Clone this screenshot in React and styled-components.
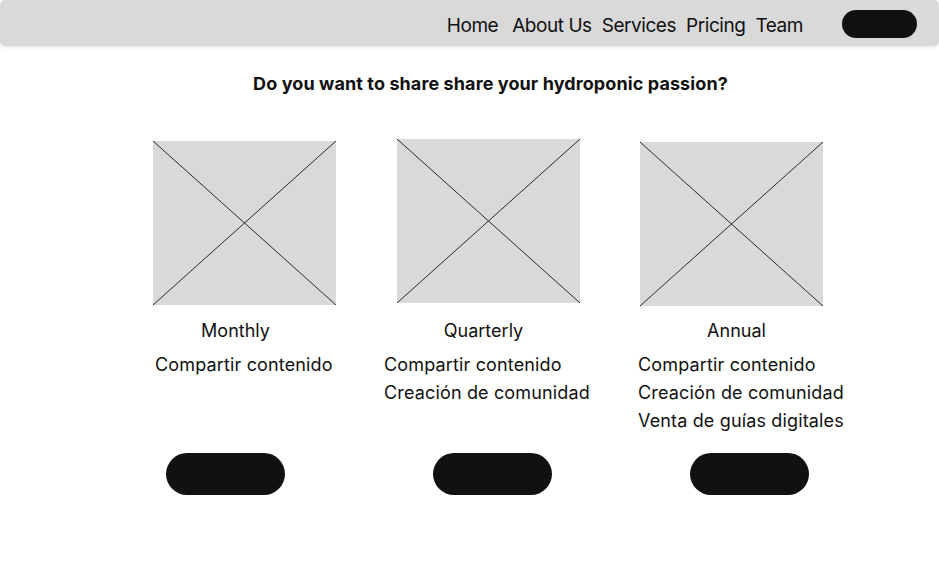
import React from "react";
import styled, { createGlobalStyle } from "styled-components";

const GlobalStyle = createGlobalStyle`
  html, body { margin: 0; padding: 0; background: #ffffff; }
  body { font-family: Inter, "Noto Sans", sans-serif; color: #111111; }
`;

const Page = styled.div`
  width: 939px;
  min-height: 568px;
  display: flex;
  flex-direction: column;
`;

const Header = styled.header`
  height: 46px;
  background: #d9d9d9;
  border-radius: 5px;
  box-shadow: 0 2px 3px rgba(0, 0, 0, 0.08);
  display: flex;
  align-items: center;
  justify-content: flex-end;
  padding: 2px 22px 0 0;
  box-sizing: border-box;
`;

const Nav = styled.nav`
  display: flex;
  gap: 10px;
  margin-right: 39px;
`;

const NavLink = styled.a`
  font-size: 19px;
  letter-spacing: -0.45px;
  color: #111111;
  text-decoration: none;
  line-height: 22px;
  margin-right: ${(p) => p.$extra || 0}px;
  margin-top: 3px;
`;

const PillButton = styled.button`
  width: ${(p) => p.$w}px;
  height: ${(p) => p.$h}px;
  border: none;
  border-radius: ${(p) => p.$h / 2}px;
  background: #111111;
  padding: 0;
  cursor: pointer;
  display: block;
`;

const Title = styled.h1`
  margin: 27px 0 0;
  font-size: 18px;
  font-weight: 700;
  line-height: 22px;
  letter-spacing: 0.1px;
  text-align: center;
  padding-left: 42px;
`;

const Plans = styled.section`
  display: flex;
  margin-top: 44px;
  padding-left: 153px;
`;

const Card = styled.div`
  width: 244px;
  display: flex;
  flex-direction: column;
  align-items: flex-start;
`;

const ImageSlot = styled.div`
  height: 167px;
  padding-top: ${(p) => p.$dy}px;
  box-sizing: border-box;
`;

const Placeholder = styled.div`
  width: 183px;
  height: 164px;
  background: #d9d9d9;
  margin-left: ${(p) => p.$dx}px;
`;

const PlanName = styled.div`
  margin-top: 13px;
  width: 183px;
  margin-left: ${(p) => p.$dx}px;
  text-align: center;
  font-size: 18px;
  line-height: 24px;
`;

const Features = styled.ul`
  list-style: none;
  margin: 8px 0 0 ${(p) => p.$dx}px;
  padding: 0;
  height: 102px;
  white-space: nowrap;
`;

const Feature = styled.li`
  font-size: 18px;
  letter-spacing: 0.15px;
  line-height: 28px;
`;

const ButtonSlot = styled.div`
  margin-left: ${(p) => p.$dx}px;
`;

const CrossImage = ({ dx }) => (
  <Placeholder $dx={dx}>
    <svg width="183" height="164" viewBox="0 0 183 164" style={{ display: "block" }}>
      <line x1="0" y1="0" x2="183" y2="164" stroke="#2b2b2b" strokeWidth="1" />
      <line x1="183" y1="0" x2="0" y2="164" stroke="#2b2b2b" strokeWidth="1" />
    </svg>
  </Placeholder>
);

const plans = [
  { name: "Monthly", features: ["Compartir contenido"], img: [2, 0], label: -9, feat: 2, btn: 13 },
  {
    name: "Quarterly",
    features: ["Compartir contenido", "Creación de comunidad"],
    img: [0, 0],
    label: -5,
    feat: -13,
    btn: 36,
  },
  {
    name: "Annual",
    features: ["Compartir contenido", "Creación de comunidad", "Venta de guías digitales"],
    img: [3, -1],
    label: 4,
    feat: -3,
    btn: 49,
  },
];

export default function App() {
  return (
    <Page>
      <GlobalStyle />
      <Header>
        <Nav>
          <NavLink href="#" $extra={4}>Home</NavLink>
          <NavLink href="#">About Us</NavLink>
          <NavLink href="#">Services</NavLink>
          <NavLink href="#">Pricing</NavLink>
          <NavLink href="#">Team</NavLink>
        </Nav>
        <PillButton $w={75} $h={28} aria-label="Sign in" />
      </Header>
      <Title>Do you want to share share your hydroponic passion?</Title>
      <Plans>
        {plans.map((p) => (
          <Card key={p.name}>
            <ImageSlot $dy={p.img[0]}>
              <CrossImage dx={p.img[1]} />
            </ImageSlot>
            <PlanName $dx={p.label}>{p.name}</PlanName>
            <Features $dx={p.feat}>
              {p.features.map((f) => (
                <Feature key={f}>{f}</Feature>
              ))}
            </Features>
            <ButtonSlot $dx={p.btn}>
              <PillButton $w={119} $h={42} aria-label={`Choose ${p.name}`} />
            </ButtonSlot>
          </Card>
        ))}
      </Plans>
    </Page>
  );
}
